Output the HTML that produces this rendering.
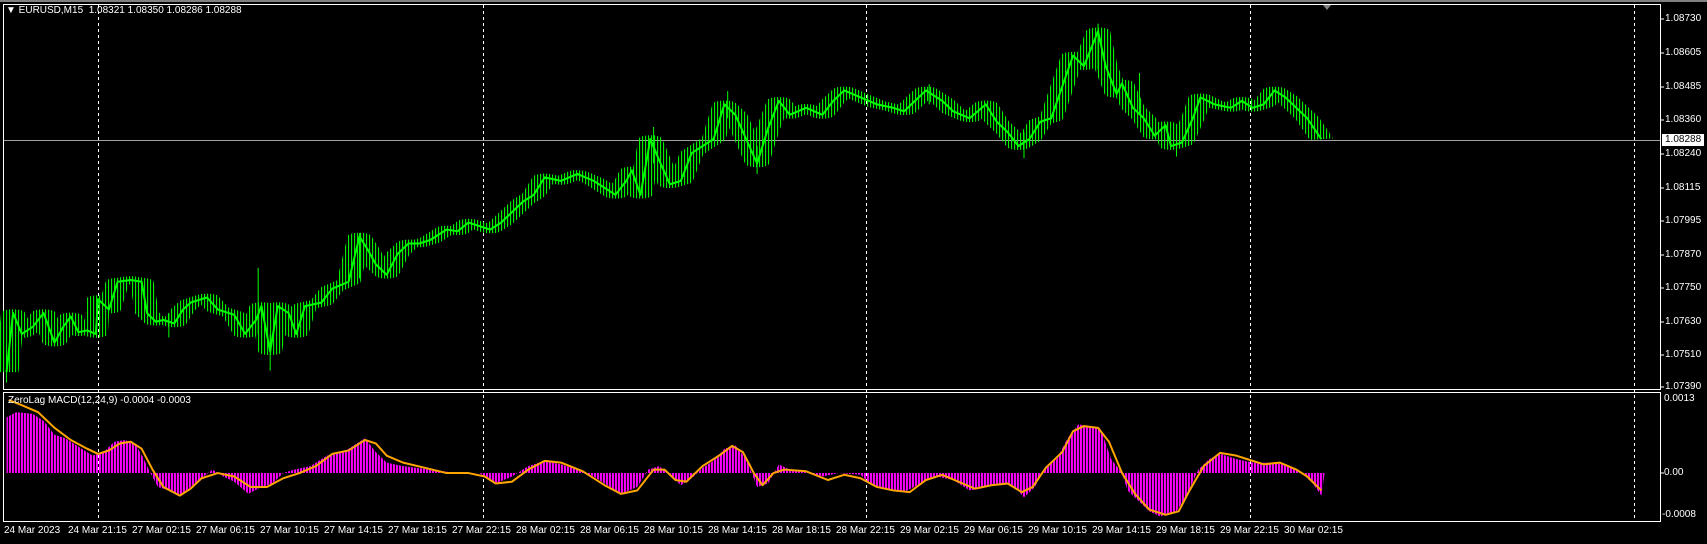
<!DOCTYPE html>
<html><head><meta charset="utf-8"><style>
html,body{margin:0;padding:0;background:#000;width:1707px;height:544px;overflow:hidden}
#w{position:relative;width:1707px;height:544px;background:#000;font-family:"Liberation Sans",sans-serif;font-size:10px;color:#fff}
.t{position:absolute;white-space:nowrap;line-height:12px}
svg{position:absolute;left:0;top:0}
</style></head><body><div id="w">
<svg width="1707" height="544" viewBox="0 0 1707 544">
<rect x="0" y="0" width="1707" height="2" fill="#808080"/>
<rect x="3.5" y="4.5" width="1657" height="385" fill="none" stroke="#fff" stroke-width="1"/>
<rect x="3.5" y="392.5" width="1657" height="129" fill="none" stroke="#fff" stroke-width="1"/>
<g stroke="#fff" stroke-width="1" stroke-dasharray="3,3">
<line x1="98.5" y1="5" x2="98.5" y2="521"/><line x1="483.5" y1="5" x2="483.5" y2="521"/>
<line x1="866.5" y1="5" x2="866.5" y2="521"/><line x1="1250.5" y1="5" x2="1250.5" y2="521"/>
<line x1="1634.5" y1="5" x2="1634.5" y2="521"/></g>
<line x1="4" y1="140.5" x2="1660" y2="140.5" stroke="#a0a0a0"/>
<polygon points="1323,5 1331,5 1327,10" fill="#808080"/>
<g stroke="#fff"><line x1="1661" y1="19" x2="1664" y2="19"/><line x1="1661" y1="53" x2="1664" y2="53"/><line x1="1661" y1="87" x2="1664" y2="87"/><line x1="1661" y1="120" x2="1664" y2="120"/><line x1="1661" y1="154" x2="1664" y2="154"/><line x1="1661" y1="188" x2="1664" y2="188"/><line x1="1661" y1="221" x2="1664" y2="221"/><line x1="1661" y1="255" x2="1664" y2="255"/><line x1="1661" y1="288" x2="1664" y2="288"/><line x1="1661" y1="322" x2="1664" y2="322"/><line x1="1661" y1="355" x2="1664" y2="355"/><line x1="1661" y1="387" x2="1664" y2="387"/><line x1="1661" y1="473" x2="1664" y2="473"/></g>
</svg>
<svg width="1707" height="544" viewBox="0 0 1567 1564" preserveAspectRatio="none">
<defs><pattern id="st" patternUnits="userSpaceOnUse" width="2.754" height="10"><rect x="0" y="0" width="1.85" height="10" fill="#ff00ff"/></pattern>
<pattern id="gs" patternUnits="userSpaceOnUse" width="2.754" height="10"><rect x="0" y="0" width="0.95" height="10" fill="#00ff00"/></pattern></defs>
<polyline fill="none" stroke="url(#gs)" stroke-width="22" stroke-linejoin="round" points="6,1070 12,900 20,960 30,940 40,900 50,985 58,940 65,910 72,955 80,950 88,960 90,860 100,890 108,810 120,805 130,810 135,900 143,925 150,920 160,930 168,890 175,870 190,855 200,890 215,905 225,960 235,920 240,880 248,1010 255,880 265,900 272,960 280,880 295,870 305,830 320,810 330,680 338,720 345,760 355,790 365,730 375,700 385,700 395,690 410,660 420,665 430,640 440,650 450,660 460,640 470,610 480,580 490,560 500,510 515,520 530,500 545,520 555,540 565,560 575,520 580,490 588,560 597,400 605,460 615,530 625,520 635,440 645,420 655,400 665,300 675,330 685,400 695,470 705,370 715,290 725,330 740,310 755,330 765,290 775,260 790,280 805,300 820,310 830,320 840,290 850,260 865,290 875,320 890,340 905,300 915,350 925,380 935,420 945,400 955,350 965,340 975,250 985,160 995,190 1008,90 1015,190 1025,270 1030,240 1040,310 1050,340 1060,390 1070,360 1075,420 1085,410 1095,340 1102,280 1115,300 1130,310 1140,290 1150,310 1160,300 1170,260 1180,280 1190,310 1200,340 1213,400"/>
<polyline fill="none" stroke="#00ff00" stroke-width="2" vector-effect="non-scaling-stroke" stroke-linejoin="round" points="6,1070 12,900 20,960 30,940 40,900 50,985 58,940 65,910 72,955 80,950 88,960 90,860 100,890 108,810 120,805 130,810 135,900 143,925 150,920 160,930 168,890 175,870 190,855 200,890 215,905 225,960 235,920 240,880 248,1010 255,880 265,900 272,960 280,880 295,870 305,830 320,810 330,680 338,720 345,760 355,790 365,730 375,700 385,700 395,690 410,660 420,665 430,640 440,650 450,660 460,640 470,610 480,580 490,560 500,510 515,520 530,500 545,520 555,540 565,560 575,520 580,490 588,560 597,400 605,460 615,530 625,520 635,440 645,420 655,400 665,300 675,330 685,400 695,470 705,370 715,290 725,330 740,310 755,330 765,290 775,260 790,280 805,300 820,310 830,320 840,290 850,260 865,290 875,320 890,340 905,300 915,350 925,380 935,420 945,400 955,350 965,340 975,250 985,160 995,190 1008,90 1015,190 1025,270 1030,240 1040,310 1050,340 1060,390 1070,360 1075,420 1085,410 1095,340 1102,280 1115,300 1130,310 1140,290 1150,310 1160,300 1170,260 1180,280 1190,310 1200,340 1213,400"/>
<g stroke="#00ff00" stroke-width="1">
<line x1="237" y1="770" x2="237" y2="960" vector-effect="non-scaling-stroke"/><line x1="248" y1="960" x2="248" y2="1065" vector-effect="non-scaling-stroke"/><line x1="600" y1="365" x2="600" y2="470" vector-effect="non-scaling-stroke"/><line x1="668" y1="262" x2="668" y2="340" vector-effect="non-scaling-stroke"/><line x1="695" y1="420" x2="695" y2="500" vector-effect="non-scaling-stroke"/><line x1="853" y1="242" x2="853" y2="300" vector-effect="non-scaling-stroke"/><line x1="940" y1="380" x2="940" y2="455" vector-effect="non-scaling-stroke"/><line x1="1008" y1="68" x2="1008" y2="200" vector-effect="non-scaling-stroke"/><line x1="1046" y1="210" x2="1046" y2="330" vector-effect="non-scaling-stroke"/><line x1="1080" y1="380" x2="1080" y2="450" vector-effect="non-scaling-stroke"/><line x1="330" y1="670" x2="330" y2="800" vector-effect="non-scaling-stroke"/><line x1="6" y1="1020" x2="6" y2="1100" vector-effect="non-scaling-stroke"/><line x1="155" y1="900" x2="155" y2="970" vector-effect="non-scaling-stroke"/></g>
<polygon fill="url(#st)" points="6,1360 6,1200 15,1185 30,1190 40,1210 50,1250 60,1260 75,1290 85,1310 95,1300 105,1270 115,1265 125,1280 132,1320 138,1360 145,1400 155,1410 165,1425 175,1400 185,1375 195,1350 205,1370 215,1385 228,1420 240,1400 250,1390 260,1360 270,1350 285,1340 300,1310 315,1300 325,1280 335,1260 345,1300 355,1330 370,1340 395,1350 420,1360 440,1360 455,1390 470,1370 485,1340 500,1325 515,1335 530,1350 545,1370 560,1400 570,1420 585,1400 595,1350 605,1340 615,1365 625,1395 635,1375 645,1345 655,1325 665,1290 675,1280 685,1320 690,1360 695,1400 705,1390 715,1335 725,1350 740,1355 755,1370 770,1360 790,1365 800,1395 815,1405 830,1415 845,1390 860,1370 875,1380 890,1410 900,1405 915,1390 930,1395 940,1430 950,1400 960,1340 970,1320 980,1260 990,1220 1000,1225 1010,1230 1020,1320 1030,1360 1035,1410 1045,1440 1055,1470 1065,1485 1080,1470 1090,1420 1100,1350 1110,1320 1120,1305 1135,1320 1150,1330 1165,1330 1180,1335 1195,1360 1205,1390 1213,1425 1216,1360"/>
<polyline fill="none" stroke="#ffa500" stroke-width="2" vector-effect="non-scaling-stroke" stroke-linejoin="round" points="8,1150 20,1165 35,1185 50,1230 65,1265 80,1290 90,1305 100,1295 110,1275 120,1270 130,1290 140,1350 150,1400 165,1425 175,1405 185,1375 200,1360 215,1370 230,1400 245,1400 260,1375 275,1360 290,1340 305,1305 320,1295 335,1265 345,1275 355,1310 370,1330 390,1345 410,1360 430,1360 445,1370 455,1390 470,1385 485,1350 500,1325 515,1330 535,1355 555,1395 570,1420 585,1410 600,1350 610,1350 620,1380 630,1385 645,1340 660,1310 672,1282 682,1300 692,1360 700,1395 710,1360 720,1350 740,1355 760,1380 775,1365 790,1375 805,1400 820,1410 835,1415 850,1380 865,1365 880,1385 895,1405 910,1395 925,1390 938,1415 948,1400 960,1345 975,1300 985,1240 995,1225 1008,1230 1018,1270 1030,1360 1042,1420 1055,1465 1070,1480 1082,1470 1092,1410 1105,1340 1120,1302 1135,1310 1150,1325 1160,1335 1175,1330 1190,1350 1200,1370 1213,1410"/>
</svg>
<div class="t" style="left:6px;top:5px">▼ EURUSD,M15&nbsp; 1.08321 1.08350 1.08286 1.08288</div>
<div class="t" style="left:8px;top:395px">ZeroLag MACD(12,24,9) -0.0004 -0.0003</div>
<div class="t" style="left:1665px;top:13px">1.08730</div>
<div class="t" style="left:1665px;top:47px">1.08605</div>
<div class="t" style="left:1665px;top:81px">1.08485</div>
<div class="t" style="left:1665px;top:114px">1.08360</div>
<div class="t" style="left:1662px;top:134px;background:#fff;color:#000;padding:0 3px">1.08288</div>
<div class="t" style="left:1665px;top:148px">1.08240</div>
<div class="t" style="left:1665px;top:182px">1.08115</div>
<div class="t" style="left:1665px;top:215px">1.07995</div>
<div class="t" style="left:1665px;top:249px">1.07870</div>
<div class="t" style="left:1665px;top:282px">1.07750</div>
<div class="t" style="left:1665px;top:316px">1.07630</div>
<div class="t" style="left:1665px;top:349px">1.07510</div>
<div class="t" style="left:1665px;top:381px">1.07390</div>
<div class="t" style="left:1664px;top:393px">0.0013</div>
<div class="t" style="left:1664px;top:467px">0.00</div>
<div class="t" style="left:1662px;top:509px">-0.0008</div>
<div class="t" style="left:4px;top:525px">24 Mar 2023</div>
<div class="t" style="left:68px;top:525px">24 Mar 21:15</div>
<div class="t" style="left:132px;top:525px">27 Mar 02:15</div>
<div class="t" style="left:196px;top:525px">27 Mar 06:15</div>
<div class="t" style="left:260px;top:525px">27 Mar 10:15</div>
<div class="t" style="left:324px;top:525px">27 Mar 14:15</div>
<div class="t" style="left:388px;top:525px">27 Mar 18:15</div>
<div class="t" style="left:452px;top:525px">27 Mar 22:15</div>
<div class="t" style="left:516px;top:525px">28 Mar 02:15</div>
<div class="t" style="left:580px;top:525px">28 Mar 06:15</div>
<div class="t" style="left:644px;top:525px">28 Mar 10:15</div>
<div class="t" style="left:708px;top:525px">28 Mar 14:15</div>
<div class="t" style="left:772px;top:525px">28 Mar 18:15</div>
<div class="t" style="left:836px;top:525px">28 Mar 22:15</div>
<div class="t" style="left:900px;top:525px">29 Mar 02:15</div>
<div class="t" style="left:964px;top:525px">29 Mar 06:15</div>
<div class="t" style="left:1028px;top:525px">29 Mar 10:15</div>
<div class="t" style="left:1092px;top:525px">29 Mar 14:15</div>
<div class="t" style="left:1156px;top:525px">29 Mar 18:15</div>
<div class="t" style="left:1220px;top:525px">29 Mar 22:15</div>
<div class="t" style="left:1284px;top:525px">30 Mar 02:15</div>
</div></body></html>
